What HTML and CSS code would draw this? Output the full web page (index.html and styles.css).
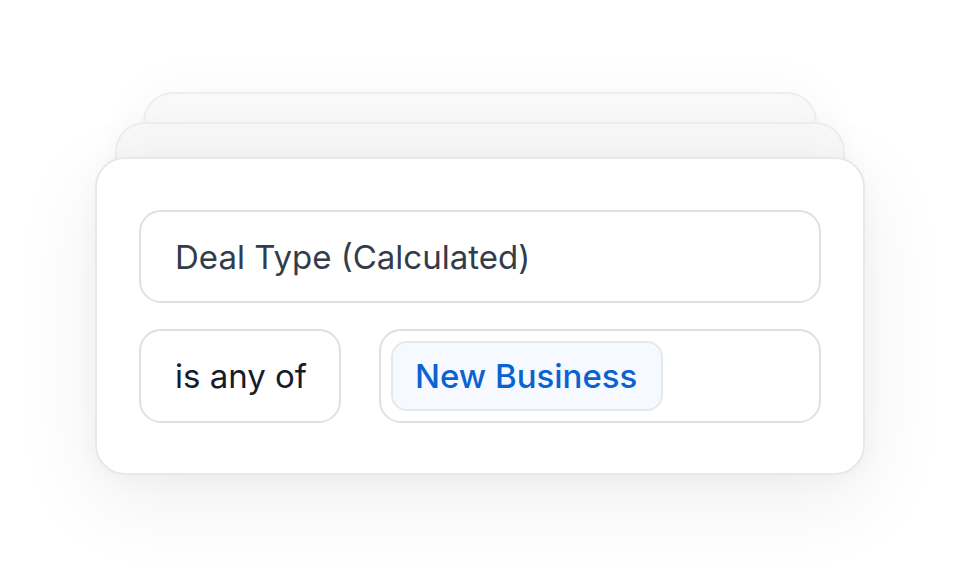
FILE: index.html
```html
<!DOCTYPE html>
<html>
<head>
<meta charset="utf-8">
<link rel="stylesheet" href="styles.css">
</head>
<body>
<div class="stage">
  <div class="stack">
    <div class="back back-far"></div>
    <div class="back back-near"></div>
    <div class="card">
      <div class="field field-wide">Deal Type (Calculated)</div>
      <div class="row">
        <div class="field field-op">is any of</div>
        <div class="field field-value">
          <span class="chip">New Business</span>
        </div>
      </div>
    </div>
  </div>
</div>
</body>
</html>
```
FILE: styles.css
```css
* { box-sizing: border-box; }
html, body { margin: 0; background: #ffffff; }
body {
  font-family: Inter, "Noto Sans", "Liberation Sans", sans-serif;
  width: 960px;
  height: 579px;
  overflow: hidden;
}
.stage {
  display: flex;
  justify-content: center;
  padding-top: 157px;
}
.stack {
  position: relative;
  width: 770px;
}
.back {
  position: absolute;
  height: 200px;
  border: 2px solid #eeeef0;
  border-radius: 30px;
  background: #f8f8f9;
}
.back-far {
  left: 48px;
  right: 48px;
  top: -65px;
  background: #f9f9fa;
  box-shadow: 0 0 60px rgba(0,0,0,0.035);
}
.back-near {
  left: 20px;
  right: 20px;
  top: -35px;
  box-shadow: 0 0 40px rgba(0,0,0,0.025);
}
.card {
  position: relative;
  background: #ffffff;
  border: 2px solid #e8e8ec;
  border-radius: 30px;
  padding: 51px 42px 50px;
  display: flex;
  flex-direction: column;
  gap: 26px;
  box-shadow: 0 24px 90px rgba(20, 20, 40, 0.07), 0 4px 24px rgba(20,20,40,0.03);
}
.field {
  height: 94px;
  border: 2px solid #dfe0e6;
  border-radius: 22px;
  display: flex;
  align-items: center;
  font-size: 33px;
  color: #333c4a;
  padding-left: 34px;
}
.field-wide { height: 93px; }
.row {
  display: flex;
  gap: 38px;
}
.field-op {
  width: 202px;
  color: #161c2a;
}
.field-value {
  flex: 1;
  padding-left: 10px;
}
.chip {
  display: flex;
  align-items: center;
  height: 70px;
  padding: 0 24px 0 22px;
  border: 2px solid #e6e8ee;
  border-radius: 16px;
  background: #f6f9ff;
  color: #0b63d1;
  font-weight: 500;
  font-size: 33px;
}
```
